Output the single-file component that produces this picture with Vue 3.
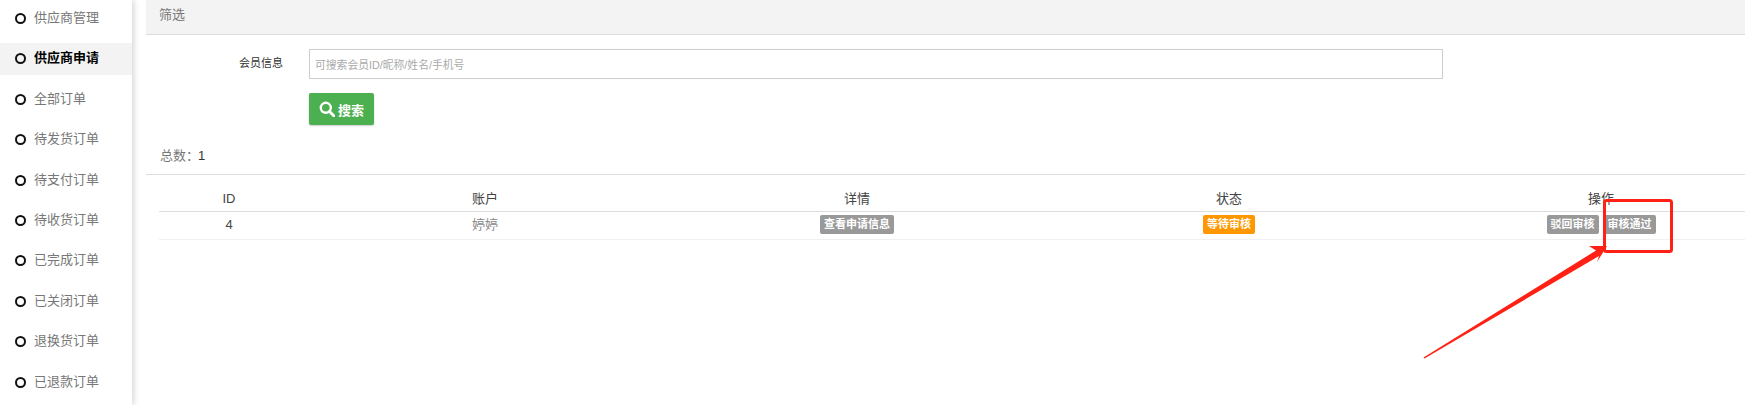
<script setup>
const navItems = ['供应商管理', '供应商申请', '全部订单', '待发货订单', '待支付订单', '待收货订单', '已完成订单', '已关闭订单', '退换货订单', '已退款订单']
</script>

<template>
  <div class="page">
    <aside class="side">
      <div v-for="(n, i) in navItems" :key="n" class="nav" :class="{ active: i === 1 }">
        <span class="dot"></span><span class="nav-text">{{ n }}</span>
      </div>
    </aside>
    <main class="main">
      <div class="head">筛选</div>
      <div class="form-row">
        <label class="lbl">会员信息</label>
        <input class="inp" placeholder="可搜索会员ID/昵称/姓名/手机号" />
      </div>
      <div class="btn-row">
        <button class="btn">
          <svg width="16" height="16" viewBox="0 0 16 16">
            <circle cx="6.8" cy="6.8" r="5" fill="none" stroke="#fff" stroke-width="2.4" />
            <path d="M10.5 10.5L15 15" stroke="#fff" stroke-width="2.8" stroke-linecap="round" />
          </svg>
          搜索
        </button>
      </div>
      <div class="total"><span class="t-l">总数：</span><span class="t-n">1</span></div>
      <div class="table">
        <div class="tr th">
          <div>ID</div><div>账户</div><div>详情</div><div>状态</div><div>操作</div>
        </div>
        <div class="tr td">
          <div class="num">4</div>
          <div class="acc">婷婷</div>
          <div><span class="tag">查看申请信息</span></div>
          <div><span class="tag orange">等待审核</span></div>
          <div class="ops"><span class="tag">驳回审核</span><span class="tag">审核通过</span></div>
        </div>
      </div>
    </main>
    <svg class="mark" width="1745" height="405" viewBox="0 0 1745 405">
      <rect x="1604.5" y="200.5" width="67" height="51" rx="2" fill="none" stroke="#ff2116" stroke-width="3" />
      <polygon points="1423.5,357.5 1424.5,358.5 1599,256 1597,262 1607,246 1589,246 1596,250.5" fill="#ff2116" />
    </svg>
  </div>
</template>

<style>
html, body { margin: 0; background: #fff; overflow: hidden; }
</style>

<style scoped>
.page {
  position: relative;
  display: flex;
  width: 1745px;
  height: 405px;
  overflow: hidden;
  background: #fff;
  font-family: "Liberation Sans", "Noto Sans CJK SC", sans-serif;
  font-size: 13px;
  color: #333;
}
.side {
  width: 132px;
  flex: none;
  padding-top: 2.6px;
  box-shadow: 2px 0 6px rgba(0, 0, 0, 0.16);
  background: #fff;
}
.nav {
  display: flex;
  align-items: center;
  height: 32px;
  margin-bottom: 8.4px;
  padding-left: 15px;
  color: #777;
}
.nav-text { padding-bottom: 4px; }
.nav.active {
  background: #f3f3f3;
  color: #000;
  font-weight: 700;
}
.dot {
  width: 7px;
  height: 7px;
  border: 2px solid #111;
  border-radius: 50%;
  margin-right: 8px;
  flex: none;
}
.main {
  flex: none;
  width: 1599px;
  margin-left: 14px;
}
.head {
  height: 34px;
  line-height: 30px;
  padding-left: 13px;
  background: #f3f3f3;
  border-bottom: 1px solid #ddd;
  color: #777;
}
.form-row {
  display: flex;
  align-items: center;
  margin-top: 14px;
  height: 30px;
}
.lbl {
  width: 137px;
  text-align: right;
  font-size: 11px;
  color: #333;
  margin-right: 26px;
  position: relative;
  top: -2px;
}
.inp {
  box-sizing: border-box;
  width: 1134px;
  height: 30px;
  border: 1px solid #ccc;
  padding: 2px 5px 0;
  font: 10.8px "Liberation Sans", "Noto Sans CJK SC", sans-serif;
  outline: none;
}
.inp::placeholder { color: #aaa; }
.btn-row {
  margin-top: 14px;
  padding-left: 163px;
}
.btn {
  display: flex;
  align-items: center;
  justify-content: center;
  gap: 3px;
  width: 65px;
  height: 32px;
  padding: 0;
  background: #4caf50;
  border: 0;
  border-radius: 2px;
  box-shadow: 0 1px 2px rgba(0, 0, 0, 0.2);
  color: #fff;
  font: 700 13px "Liberation Sans", "Noto Sans CJK SC", sans-serif;
}
.total {
  height: 49px;
  line-height: 62px;
  padding-left: 14px;
  border-bottom: 1px solid #ddd;
}
.t-l { color: #777; }
.t-n { color: #333; margin-left: -1px; }
.table { margin-left: 13px; }
.tr {
  display: grid;
  grid-template-columns: 140px repeat(4, 372px);
  text-align: center;
}
.th {
  height: 36px;
  line-height: 48px;
  border-bottom: 1px solid #ddd;
  color: #444;
}
.td {
  height: 27px;
  line-height: 26px;
  border-bottom: 1px solid #f0f0f0;
}
.num { color: #444; }
.acc { color: #888; }
.tag {
  display: inline-block;
  height: 19px;
  line-height: 18px;
  padding: 0 4px;
  background: #999;
  border-radius: 2px;
  color: #fff;
  font-size: 11px;
  font-weight: 700;
  vertical-align: top;
  margin-top: 3px;
}
.tag.orange { background: #ff9800; }
.ops {
  display: flex;
  justify-content: center;
  gap: 5px;
}
.mark {
  position: absolute;
  left: 0;
  top: 0;
  pointer-events: none;
}
</style>
